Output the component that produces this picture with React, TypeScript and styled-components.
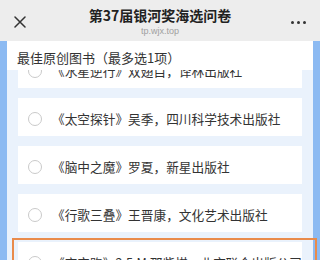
import styled, { createGlobalStyle } from 'styled-components';

const GlobalStyle = createGlobalStyle`
  html, body {
    margin: 0;
    padding: 0;
    background: #eaf2fc;
  }
  body {
    font-family: 'Noto Sans CJK SC', 'Noto Sans', sans-serif;
    color: #333;
    width: 320px;
    height: 260px;
    overflow: hidden;
  }
`;

const Screen = styled.div`
  width: 320px;
  height: 260px;
  overflow: hidden;
  display: flex;
  flex-direction: column;
`;

const NavBar = styled.div`
  height: 41px;
  flex-shrink: 0;
  background: #ededed;
  display: grid;
  grid-template-columns: 40px 1fr 40px;
  align-items: center;
`;

const NavButton = styled.div`
  display: flex;
  align-items: center;
  justify-content: center;
  height: 100%;
  padding-top: 3px;
  box-sizing: border-box;
`;

const NavTitleBlock = styled.div`
  display: flex;
  flex-direction: column;
  align-items: center;
  padding-top: 1px;
`;

const NavTitle = styled.div`
  font-size: 14px;
  font-weight: 700;
  line-height: 18px;
  color: #222;
`;

const NavHost = styled.div`
  font-family: 'Liberation Sans', Arial, sans-serif;
  font-size: 9px;
  line-height: 12px;
  color: #a0a0a0;
  margin-top: 1px;
`;

const Dots = styled.div`
  display: flex;
  gap: 3px;
  margin-left: -4px;

  span {
    width: 3px;
    height: 3px;
    border-radius: 50%;
    background: #333;
  }
`;

const Page = styled.div`
  flex: 1;
  min-height: 0;
  background: #eaf2fc;
  border-left: 7px solid #8cbaf2;
  border-right: 7px solid #8cbaf2;
  overflow: visible;
`;

const SectionHeader = styled.div`
  position: sticky;
  top: 0;
  z-index: 1;
  background: #fff;
  padding: 7px 10px 2px;
  font-size: 13px;
  line-height: 20px;
  color: #333;
`;

const OptionList = styled.div`
  margin-top: -20px;
  display: flex;
  flex-direction: column;
`;

const OptionCard = styled.div`
  margin: 0 11px 10px 11px;
  height: 38px;
  box-sizing: border-box;
  padding: 12px 0 8px 10px;
  background: #fff;
  display: flex;
  align-items: center;
  gap: 10px;
  font-size: 12.7px;
  line-height: 18px;
  color: #333;
  white-space: nowrap;
  overflow: hidden;
`;

const Radio = styled.span`
  flex-shrink: 0;
  width: 14px;
  height: 14px;
  box-sizing: border-box;
  border: 1px solid #cacaca;
  border-radius: 50%;
  background: #fff;
`;

const Highlight = styled.div`
  position: relative;
  margin: -4px -4px 0 5px;
  border: 2px solid #e98b4b;
  padding-top: 2px;

  ${OptionCard} {
    margin: 0 13px 0 4px;
  }
`;

const options = [
  '《水星逆行》双翅目，译林出版社',
  '《太空探针》吴季，四川科学技术出版社',
  '《脑中之魔》罗夏，新星出版社',
  '《行歌三叠》王晋康，文化艺术出版社',
];

const CloseIcon = () => (
  <svg width="12" height="12" viewBox="0 0 12 12">
    <path d="M1 1 L11 11 M11 1 L1 11" stroke="#333" strokeWidth="1.5" strokeLinecap="round" />
  </svg>
);

export default function App() {
  return (
    <Screen>
      <GlobalStyle />
      <NavBar>
        <NavButton>
          <CloseIcon />
        </NavButton>
        <NavTitleBlock>
          <NavTitle>第37届银河奖海选问卷</NavTitle>
          <NavHost>tp.wjx.top</NavHost>
        </NavTitleBlock>
        <NavButton>
          <Dots>
            <span />
            <span />
            <span />
          </Dots>
        </NavButton>
      </NavBar>
      <Page>
        <SectionHeader>最佳原创图书（最多选1项）</SectionHeader>
        <OptionList>
          {options.map((text) => (
            <OptionCard key={text}>
              <Radio />
              {text}
            </OptionCard>
          ))}
          <Highlight>
            <OptionCard>
              <Radio />
              《宇宙跑》2.5.M 邵紫棋，北京联合出版公司
            </OptionCard>
          </Highlight>
        </OptionList>
      </Page>
    </Screen>
  );
}
